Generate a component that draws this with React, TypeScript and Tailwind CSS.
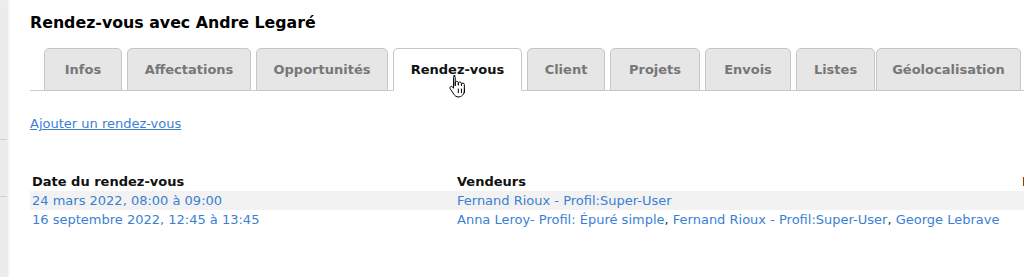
import React from "react";

const tabs = [
  { label: "Infos", w: "w-[78px]" },
  { label: "Affectations", w: "w-[124px]" },
  { label: "Opportunités", w: "w-[132px]" },
  { label: "Rendez-vous", w: "w-[129px]", active: true },
  { label: "Client", w: "w-[78px]" },
  { label: "Projets", w: "w-[90px]" },
  { label: "Envois", w: "w-[86px]" },
  { label: "Listes", w: "w-[79px]" },
  { label: "Géolocalisation", w: "w-[145px]" },
];

const rows = [
  {
    date: "24 mars 2022, 08:00 à 09:00",
    vendeurs: ["Fernand Rioux - Profil:Super-User"],
  },
  {
    date: "16 septembre 2022, 12:45 à 13:45",
    vendeurs: [
      "Anna Leroy- Profil: Épuré simple",
      "Fernand Rioux - Profil:Super-User",
      "George Lebrave",
    ],
  },
];

function HandCursor() {
  return (
    <svg
      width="20"
      height="27"
      viewBox="0 0 18 24"
      className="absolute left-[54px] top-[25px]"
    >
      <path
        d="M5 1.5c.9 0 1.5.6 1.5 1.5v7.5V7.8c0-.8.6-1.3 1.4-1.3s1.4.5 1.4 1.3v2.2-1.6c0-.8.6-1.3 1.4-1.3s1.4.5 1.4 1.3v1.9-1c0-.8.6-1.3 1.3-1.3s1.3.5 1.3 1.3v5.4c0 3.3-2.2 5.8-5.4 5.8H9.5c-2 0-3.2-.9-4.2-2.4L2 13.2c-.5-.8-.3-1.6.3-2s1.4-.2 1.9.4l.8 1.1V3c0-.9.6-1.5 1.5-1.5z"
        fill="#fff"
        stroke="#000"
        strokeWidth="0.9"
        strokeLinejoin="round"
      />
      <path d="M9.3 13v4M12.1 13v4M14.8 13v4" stroke="#000" strokeWidth="0.9" />
    </svg>
  );
}

export default function App() {
  return (
    <div className="flex h-[277px] w-[1024px] overflow-hidden bg-white font-['DejaVu_Sans','Verdana',sans-serif] text-[13px]">
      {/* left rail */}
      <div className="relative w-[7px] shrink-0 bg-[#ececec] shadow-[1px_0_3px_rgba(0,0,0,0.12)]">
        <div className="mt-[139px] h-px bg-[#cfcfcf]" />
        <div className="mt-[56px] h-px bg-[#cfcfcf]" />
      </div>

      <div className="flex-1 pl-[23px]">
        <h1 className="pt-[13px] text-[15.8px] font-bold leading-[20px] text-black">
          Rendez-vous avec Andre Legaré
        </h1>

        {/* tabs */}
        <div className="mt-[15px] flex border-b border-[#cccccc] pl-[14px]">
          {tabs.map((t, i) => (
            <div
              key={t.label}
              className={`relative -mb-px flex h-[43px] items-center justify-center rounded-t-[5px] border border-[#c6c6c6] font-bold ${t.w} ${
                i === 8 ? "ml-[1px]" : i === 0 ? "" : "ml-[5px]"
              } ${
                t.active
                  ? "border-b-white bg-white text-[#111]"
                  : "bg-[#e6e6e6] text-[#777777]"
              }`}
            >
              {t.label}
              {t.active && <HandCursor />}
            </div>
          ))}
        </div>

        <a href="#" className="mt-[25px] inline-block leading-[16px] text-[#3b7fd4] underline">
          Ajouter un rendez-vous
        </a>

        {/* table */}
        <div className="mt-[38px] grid grid-cols-[427px_565px_1fr]">
          <div className="px-[2px] font-bold leading-[19px] text-[#111]">Date du rendez-vous</div>
          <div className="font-bold leading-[19px] text-[#111]">Vendeurs</div>
          <div className="overflow-hidden whitespace-nowrap font-bold leading-[19px] text-[#111]">L</div>
          {rows.map((r, i) => (
            <div
              key={r.date}
              className={`col-span-3 grid grid-cols-[427px_565px_1fr] leading-[19px] ${
                i === 0 ? "bg-[#f2f2f2]" : ""
              }`}
            >
              <div className="px-[2px] text-[#3b7fd4]">{r.date}</div>
              <div className="whitespace-nowrap text-[#3b7fd4]">
                {r.vendeurs.map((v, j) => (
                  <React.Fragment key={v}>
                    {j > 0 && <span className="text-[#333]">, </span>}
                    <span>{v}</span>
                  </React.Fragment>
                ))}
              </div>
              <div />
            </div>
          ))}
        </div>
      </div>
    </div>
  );
}
